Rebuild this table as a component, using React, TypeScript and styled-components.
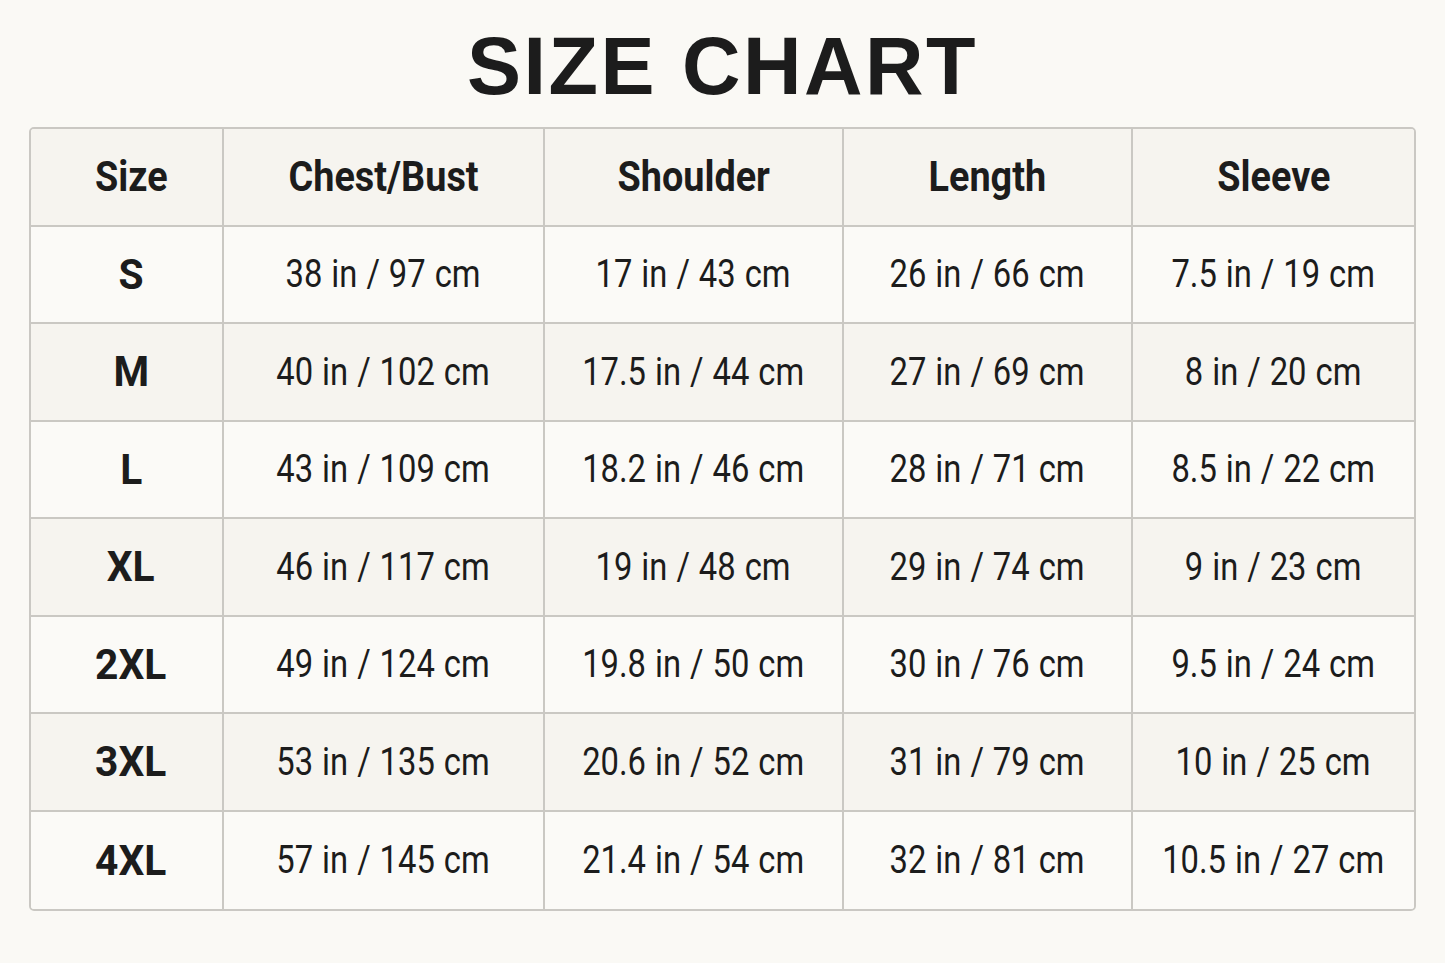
import React from 'react'
import styled, { createGlobalStyle } from 'styled-components'

const GlobalStyle = createGlobalStyle`
  html, body {
    margin: 0;
    padding: 0;
    background: #faf9f5;
  }
  body {
    font-family: Roboto, "Liberation Sans", sans-serif;
    color: #1c1c1c;
  }
`

const Page = styled.div`
  width: 1445px;
  height: 963px;
  box-sizing: border-box;
  padding: 26px 29px 0;
  display: flex;
  flex-direction: column;
  align-items: center;
`

const Title = styled.h1`
  margin: 0 0 20px;
  font-family: "Liberation Sans", Arial, sans-serif;
  font-weight: 700;
  font-size: 81px;
  line-height: 1;
  letter-spacing: 2.5px;
  color: #1c1c1c;
`

const Table = styled.div`
  width: 1387px;
  display: grid;
  grid-template-columns: 193px 321px 299px 289px 1fr;
  grid-auto-rows: 97.5px;
  border: 2px solid #cac8c3;
  border-radius: 5px;
  box-sizing: border-box;
  overflow: hidden;
`

const Cell = styled.div<{ $shaded?: boolean; $first?: boolean; $last?: boolean; $bottom?: boolean }>`
  display: flex;
  align-items: center;
  justify-content: center;
  box-sizing: border-box;
  padding-left: ${p => (p.$first ? '9px' : '0')};
  background: ${p => (p.$shaded ? '#f6f4ef' : '#fbfaf7')};
  border-right: ${p => (p.$last ? 'none' : '2px solid #cac8c3')};
  border-bottom: ${p => (p.$bottom ? 'none' : '2px solid #cac8c3')};
`

const HeadText = styled.span`
  display: inline-block;
  font-weight: 700;
  font-size: 42px;
  transform: scaleX(0.9);
  white-space: nowrap;
`

const SizeText = styled.span`
  display: inline-block;
  font-weight: 700;
  font-size: 42px;
  transform: scaleX(0.97);
  white-space: nowrap;
`

const ValueText = styled.span`
  display: inline-block;
  font-weight: 400;
  font-size: 39px;
  word-spacing: 1px;
  transform: scaleX(0.84);
  white-space: nowrap;
`

const headers = ['Size', 'Chest/Bust', 'Shoulder', 'Length', 'Sleeve']

const rows: string[][] = [
  ['S', '38 in / 97 cm', '17 in / 43 cm', '26 in / 66 cm', '7.5 in / 19 cm'],
  ['M', '40 in / 102 cm', '17.5 in / 44 cm', '27 in / 69 cm', '8 in / 20 cm'],
  ['L', '43 in / 109 cm', '18.2 in / 46 cm', '28 in / 71 cm', '8.5 in / 22 cm'],
  ['XL', '46 in / 117 cm', '19 in / 48 cm', '29 in / 74 cm', '9 in / 23 cm'],
  ['2XL', '49 in / 124 cm', '19.8 in / 50 cm', '30 in / 76 cm', '9.5 in / 24 cm'],
  ['3XL', '53 in / 135 cm', '20.6 in / 52 cm', '31 in / 79 cm', '10 in / 25 cm'],
  ['4XL', '57 in / 145 cm', '21.4 in / 54 cm', '32 in / 81 cm', '10.5 in / 27 cm'],
]

const App = () => {
  return (
    <>
      <GlobalStyle />
      <Page>
        <Title>SIZE CHART</Title>
        <Table>
          {headers.map((h, i) => (
            <Cell key={h} $shaded $first={i === 0} $last={i === headers.length - 1}>
              <HeadText>{h}</HeadText>
            </Cell>
          ))}
          {rows.map((row, r) =>
            row.map((val, c) => (
              <Cell
                key={`${r}-${c}`}
                $shaded={r % 2 === 1}
                $first={c === 0}
                $last={c === row.length - 1}
                $bottom={r === rows.length - 1}
              >
                {c === 0 ? <SizeText>{val}</SizeText> : <ValueText>{val}</ValueText>}
              </Cell>
            ))
          )}
        </Table>
      </Page>
    </>
  )
}

export default App
